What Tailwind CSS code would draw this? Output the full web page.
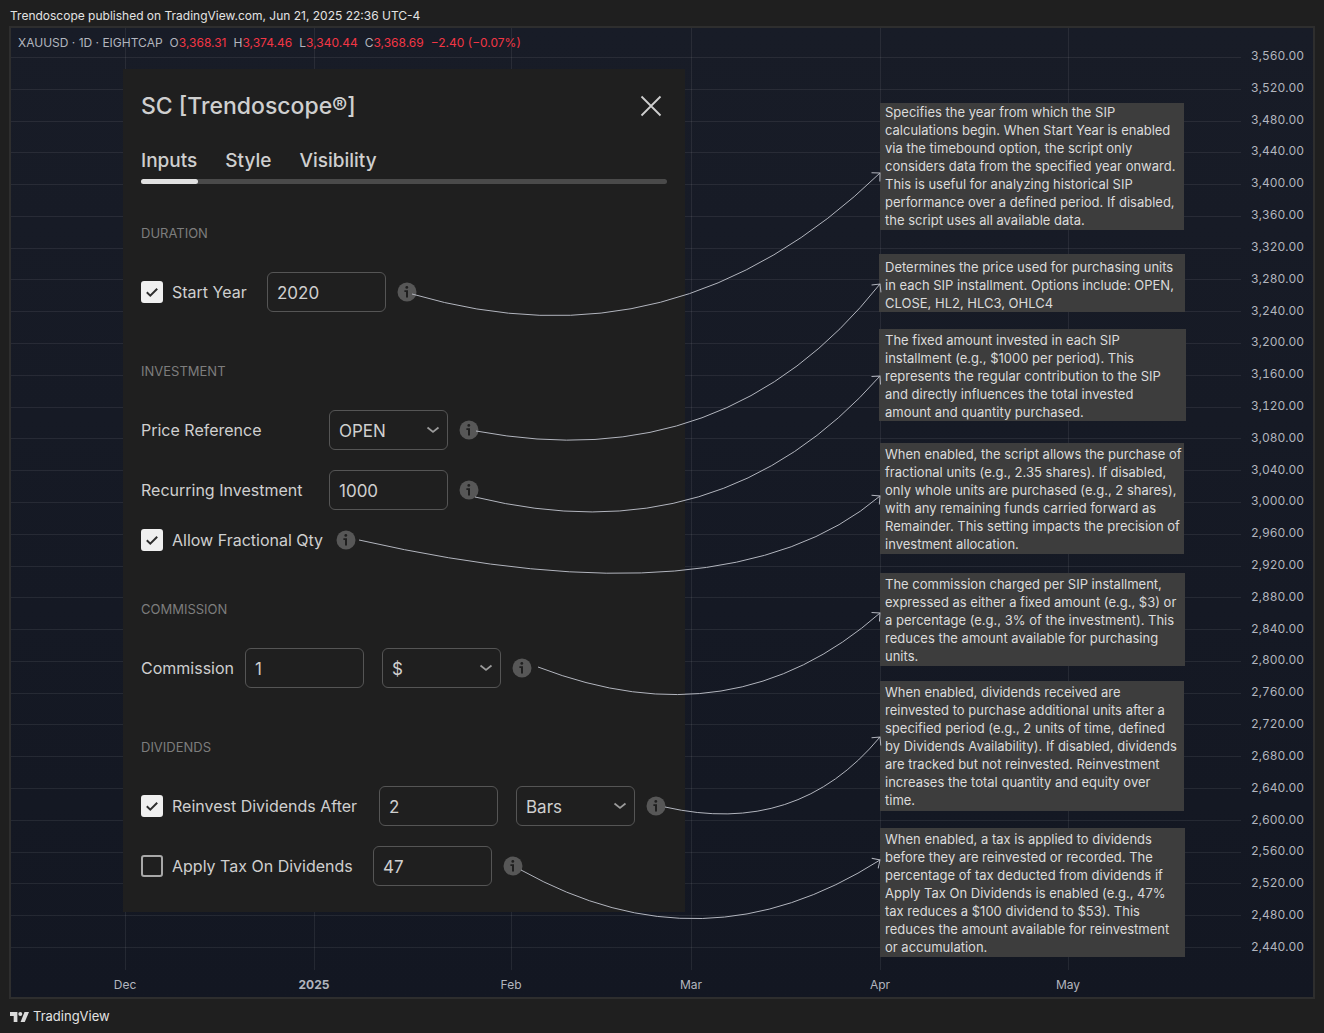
<!DOCTYPE html>
<html lang="en">
<head>
<meta charset="utf-8">
<meta name="viewport" content="width=device-width, initial-scale=1">
<title>XAUUSD · SC [Trendoscope®]</title>
<script src="https://cdn.jsdelivr.net/npm/@tailwindcss/browser@4"></script>
</head>
<body class="flex min-h-screen flex-col bg-[#1f1f1f] font-['Inter',sans-serif] text-xs text-[#b2b5be]">

<!-- Shared icons -->
<svg class="hidden" aria-hidden="true">
  <symbol id="info" viewBox="0 0 20 20">
    <circle cx="10" cy="10" r="9.5" fill="#575757"/>
    <circle cx="9.8" cy="5.4" r="1.4" fill="#1f1f1f"/>
    <path d="M7.4 8.2h3.6v7.2H9V10H7.4z" fill="#1f1f1f"/>
  </symbol>
  <symbol id="check" viewBox="0 0 22 22">
    <path d="M5.8 11.3l3.5 3.4 6.9-6.9" fill="none" stroke="#2e2e2e" stroke-width="2"/>
  </symbol>
  <symbol id="chevron" viewBox="0 0 14 8">
    <path d="M1.5 1.5L7 6l5.5-4.500" fill="none" stroke="#9c9c9c" stroke-width="1.7"/>
  </symbol>
</svg>

<header class="flex h-[26px] items-center px-[10px] pt-[6px] text-[#e3e3e3]">Trendoscope published on TradingView.com, Jun 21, 2025 22:36 UTC-4</header>

<main class="relative mx-[9px] grid min-h-[960px] flex-1 grid-cols-[1fr_72px] grid-rows-[1fr_27px] border-2 border-[#2e2e2e] bg-linear-to-b from-[#181c27] to-[#131722]">

  <!-- Plot grid -->
  <div class="relative">
    <div class="absolute inset-0 flex flex-col justify-between pt-[29px] pb-[22px]" id="rules"></div>
    <div class="grid h-full grid-cols-[115px_189px_197px_180px_189px_188px_1fr]">
      <div class="border-r border-[#f2f2f2]/8"></div><div class="border-r border-[#f2f2f2]/8"></div><div class="border-r border-[#f2f2f2]/8"></div><div class="border-r border-[#f2f2f2]/8"></div><div class="border-r border-[#f2f2f2]/8"></div><div class="border-r border-[#f2f2f2]/8"></div>
    </div>
  </div>

  <!-- Price scale -->
  <div class="flex flex-col justify-between pt-[21px] pb-[16px] pl-[10px] leading-[14px] tabular-nums">
    <span>3,560.00</span><span>3,520.00</span><span>3,480.00</span><span>3,440.00</span><span>3,400.00</span><span>3,360.00</span><span>3,320.00</span><span>3,280.00</span><span>3,240.00</span><span>3,200.00</span><span>3,160.00</span><span>3,120.00</span><span>3,080.00</span><span>3,040.00</span><span>3,000.00</span><span>2,960.00</span><span>2,920.00</span><span>2,880.00</span><span>2,840.00</span><span>2,800.00</span><span>2,760.00</span><span>2,720.00</span><span>2,680.00</span><span>2,640.00</span><span>2,600.00</span><span>2,560.00</span><span>2,520.00</span><span>2,480.00</span><span>2,440.00</span>
  </div>

  <!-- Time scale -->
  <div class="grid grid-cols-[114px_189px_197px_180px_189px_188px_1fr] pt-[7px]">
    <div class="flex justify-end"><span class="translate-x-1/2">Dec</span></div>
    <div class="flex justify-end"><span class="translate-x-1/2 font-bold">2025</span></div>
    <div class="flex justify-end"><span class="translate-x-1/2">Feb</span></div>
    <div class="flex justify-end"><span class="translate-x-1/2">Mar</span></div>
    <div class="flex justify-end"><span class="translate-x-1/2">Apr</span></div>
    <div class="flex justify-end"><span class="translate-x-1/2">May</span></div>
  </div>

  <!-- Symbol legend -->
  <div class="absolute top-[7px] left-[7px] flex gap-[7px] whitespace-nowrap">
    <span>XAUUSD · 1D · EIGHTCAP</span>
    <span>O<span class="text-[#f23645]">3,368.31</span></span>
    <span>H<span class="text-[#f23645]">3,374.46</span></span>
    <span>L<span class="text-[#f23645]">3,340.44</span></span>
    <span>C<span class="text-[#f23645]">3,368.69</span></span>
    <span class="text-[#f23645]">−2.40 (−0.07%)</span>
  </div>

  <!-- Settings dialog pinned on the chart -->
  <form class="absolute top-[41px] left-[112px] w-[562px] bg-[#1f1f1f] px-[18px] pt-[21px] pb-[26px] text-base text-[#cfcfcf]">
    <div class="flex h-8 items-center justify-between pr-[5px]">
      <h1 class="text-[23px] font-medium">SC [Trendoscope®]</h1>
      <button type="button" aria-label="Close"><svg class="size-[22px]" viewBox="0 0 22 22" fill="none" stroke="#cfcfcf" stroke-width="1.8"><path d="M1.5 1.5l19 19M20.5 1.5l-19 19"/></svg></button>
    </div>
    <div class="flex gap-7 pt-[27px] pb-[6px] text-[19px] leading-6 font-medium">
      <button type="button">Inputs</button><button type="button">Style</button><button type="button">Visibility</button>
    </div>
    <div class="h-[5px] rounded-full bg-[#4a4a4a]"><div class="h-full w-[57px] rounded-full bg-[#e0e0e0]"></div></div>

    <div class="flex flex-col gap-[49px] pt-[39px]">
      <section class="flex flex-col gap-[29px]">
        <h2 class="text-[13px] leading-5 text-[#7d7d7d]">DURATION</h2>
        <div class="flex h-10 items-center">
          <span class="relative mr-[9px] size-[22px]"><input id="start" type="checkbox" checked class="block size-[22px] appearance-none rounded-[3px] border-2 border-[#a8a8a8] checked:border-[#f0f0f0] checked:bg-[#f0f0f0]"><svg class="pointer-events-none absolute inset-0 size-[22px]"><use href="#check"/></svg></span>
          <label for="start" class="w-[95px]">Start Year</label>
          <input aria-label="Year" value="2020" class="mr-[11px] h-10 w-[119px] rounded-md border border-[#555] px-[9px] pt-[2px] text-[17px]">
          <svg class="size-5"><use href="#info"/></svg>
        </div>
      </section>

      <section class="flex flex-col gap-[29px]">
        <h2 class="text-[13px] leading-5 text-[#7d7d7d]">INVESTMENT</h2>
        <div class="flex flex-col gap-5">
          <div class="flex h-10 items-center">
            <label for="price" class="w-[188px]">Price Reference</label>
            <span class="relative mr-[11px]"><select id="price" class="block h-10 w-[119px] appearance-none rounded-md border border-[#555] px-[9px] pt-[3px] text-[17px]"><option>OPEN</option><option>CLOSE</option><option>HL2</option><option>HLC3</option><option>OHLC4</option></select><svg class="pointer-events-none absolute top-4 right-2 h-2 w-[14px]"><use href="#chevron"/></svg></span>
            <svg class="size-5"><use href="#info"/></svg>
          </div>
          <div class="flex h-10 items-center">
            <label for="recurring" class="w-[188px]">Recurring Investment</label>
            <input id="recurring" value="1000" class="mr-[11px] h-10 w-[119px] rounded-md border border-[#555] px-[9px] pt-[2px] text-[17px]">
            <svg class="size-5"><use href="#info"/></svg>
          </div>
          <div class="flex h-5 items-center">
            <span class="relative mr-[9px] size-[22px]"><input id="fractional" type="checkbox" checked class="block size-[22px] appearance-none rounded-[3px] border-2 border-[#a8a8a8] checked:border-[#f0f0f0] checked:bg-[#f0f0f0]"><svg class="pointer-events-none absolute inset-0 size-[22px]"><use href="#check"/></svg></span>
            <label for="fractional" class="mr-[11px] w-[153px] whitespace-nowrap">Allow Fractional Qty</label>
            <svg class="size-5"><use href="#info"/></svg>
          </div>
        </div>
      </section>

      <section class="flex flex-col gap-[29px]">
        <h2 class="text-[13px] leading-5 text-[#7d7d7d]">COMMISSION</h2>
        <div class="flex h-10 items-center">
          <label for="commission" class="w-[104px]">Commission</label>
          <input id="commission" value="1" class="mr-[18px] h-10 w-[119px] rounded-md border border-[#555] px-[9px] pt-[2px] text-[17px]">
          <span class="relative mr-[11px]"><select aria-label="Commission unit" class="block h-10 w-[119px] appearance-none rounded-md border border-[#555] px-[9px] pt-[3px] text-[17px]"><option>$</option><option>%</option></select><svg class="pointer-events-none absolute top-4 right-2 h-2 w-[14px]"><use href="#chevron"/></svg></span>
          <svg class="size-5"><use href="#info"/></svg>
        </div>
      </section>

      <section class="flex flex-col gap-[29px]">
        <h2 class="text-[13px] leading-5 text-[#7d7d7d]">DIVIDENDS</h2>
        <div class="flex flex-col gap-5">
          <div class="flex h-10 items-center">
            <span class="relative mr-[9px] size-[22px]"><input id="reinvest" type="checkbox" checked class="block size-[22px] appearance-none rounded-[3px] border-2 border-[#a8a8a8] checked:border-[#f0f0f0] checked:bg-[#f0f0f0]"><svg class="pointer-events-none absolute inset-0 size-[22px]"><use href="#check"/></svg></span>
            <label for="reinvest" class="w-[207px]">Reinvest Dividends After</label>
            <input aria-label="Reinvest period" value="2" class="mr-[18px] h-10 w-[119px] rounded-md border border-[#555] px-[9px] pt-[2px] text-[17px]">
            <span class="relative mr-[11px]"><select aria-label="Period unit" class="block h-10 w-[119px] appearance-none rounded-md border border-[#555] px-[9px] pt-[3px] text-[17px]"><option>Bars</option></select><svg class="pointer-events-none absolute top-4 right-2 h-2 w-[14px]"><use href="#chevron"/></svg></span>
            <svg class="size-5"><use href="#info"/></svg>
          </div>
          <div class="flex h-10 items-center">
            <span class="relative mr-[9px] size-[22px]"><input id="tax" type="checkbox" class="block size-[22px] appearance-none rounded-[3px] border-2 border-[#a8a8a8] checked:border-[#f0f0f0] checked:bg-[#f0f0f0]"></span>
            <label for="tax" class="w-[201px]">Apply Tax On Dividends</label>
            <input aria-label="Tax percentage" value="47" class="mr-[11px] h-10 w-[119px] rounded-md border border-[#555] px-[9px] pt-[2px] text-[17px]">
            <svg class="size-5"><use href="#info"/></svg>
          </div>
        </div>
      </section>
    </div>
  </form>

  <!-- Notes pinned on the chart -->
  <div class="text-[13px] leading-[18px] whitespace-nowrap text-[#dbdbdb]">
    <p class="absolute top-[75px] left-[869px] h-[127px] w-[304px] bg-[#3d3d3d] pl-[5px]">Specifies the year from which the SIP<br>calculations begin. When Start Year is enabled<br>via the timebound option, the script only<br>considers data from the specified year onward.<br>This is useful for analyzing historical SIP<br>performance over a defined period. If disabled,<br>the script uses all available data.</p>
    <p class="absolute top-[226px] left-[868px] h-[58px] w-[306px] bg-[#3d3d3d] pt-1 pl-[6px]">Determines the price used for purchasing units<br>in each SIP installment. Options include: OPEN,<br>CLOSE, HL2, HLC3, OHLC4</p>
    <p class="absolute top-[301px] left-[868px] h-[92px] w-[307px] bg-[#3d3d3d] pt-[2px] pl-[6px]">The fixed amount invested in each SIP<br>installment (e.g., $1000 per period). This<br>represents the regular contribution to the SIP<br>and directly influences the total invested<br>amount and quantity purchased.</p>
    <p class="absolute top-[415px] left-[869px] h-[111px] w-[304px] bg-[#3d3d3d] pt-[2px] pl-[5px]">When enabled, the script allows the purchase of<br>fractional units (e.g., 2.35 shares). If disabled,<br>only whole units are purchased (e.g., 2 shares),<br>with any remaining funds carried forward as<br>Remainder. This setting impacts the precision of<br>investment allocation.</p>
    <p class="absolute top-[545px] left-[869px] h-[93px] w-[305px] bg-[#3d3d3d] pt-[2px] pl-[5px]">The commission charged per SIP installment,<br>expressed as either a fixed amount (e.g., $3) or<br>a percentage (e.g., 3% of the investment). This<br>reduces the amount available for purchasing<br>units.</p>
    <p class="absolute top-[653px] left-[869px] h-[130px] w-[304px] bg-[#3d3d3d] pt-[2px] pl-[5px]">When enabled, dividends received are<br>reinvested to purchase additional units after a<br>specified period (e.g., 2 units of time, defined<br>by Dividends Availability). If disabled, dividends<br>are tracked but not reinvested. Reinvestment<br>increases the total quantity and equity over<br>time.</p>
    <p class="absolute top-[800px] left-[869px] h-[129px] w-[305px] bg-[#3d3d3d] pt-[2px] pl-[5px]">When enabled, a tax is applied to dividends<br>before they are reinvested or recorded. The<br>percentage of tax deducted from dividends if<br>Apply Tax On Dividends is enabled (e.g., 47%<br>tax reduces a $100 dividend to $53). This<br>reduces the amount available for reinvestment<br>or accumulation.</p>
  </div>

  <!-- Arrows from each info icon to its note -->
  <svg class="pointer-events-none absolute inset-0 size-full" fill="none" stroke="#b2b5be" stroke-width="1" aria-hidden="true">
    <defs><marker id="tip" viewBox="-8 -8 10 16" refX="0" refY="0" markerWidth="10" markerHeight="16" orient="auto"><path d="M-6 -6L0 0L-6 6" fill="none" stroke="#b2b5be"/></marker></defs>
    <g transform="translate(-11 -28)">
      <path marker-end="url(#tip)" d="M412 294Q675 371 880 173"/>
      <path marker-end="url(#tip)" d="M476 431Q726 478 880 284"/>
      <path marker-end="url(#tip)" d="M475 497Q720 557 880 376"/>
      <path marker-end="url(#tip)" d="M359 540Q730 624 880 496"/>
      <path marker-end="url(#tip)" d="M538 667Q733 742 880 613"/>
      <path marker-end="url(#tip)" d="M665 807Q797 837 880 737"/>
      <path marker-end="url(#tip)" d="M521 870Q704 972 880 860"/>
    </g>
  </svg>
</main>

<footer class="flex h-[34px] items-center gap-1 px-[10px] pt-[2px] text-[13px] text-[#e3e3e3]">
  <svg class="h-[10px] w-[19px]" viewBox="0 0 36 19" fill="#dbdbdb" preserveAspectRatio="none" aria-hidden="true"><path d="M14 19H7V7.500H0V0h14z"/><circle cx="19.500" cy="3.800" r="3.800"/><path d="M28 19h-8L27.500 0H36z"/></svg>
  <span>TradingView</span>
</footer>

<script>
  // One horizontal rule for each label of the price scale
  document.getElementById('rules').innerHTML = '<div class="h-px bg-[#f2f2f2]/8"></div>'.repeat(29);
</script>
</body>
</html>
